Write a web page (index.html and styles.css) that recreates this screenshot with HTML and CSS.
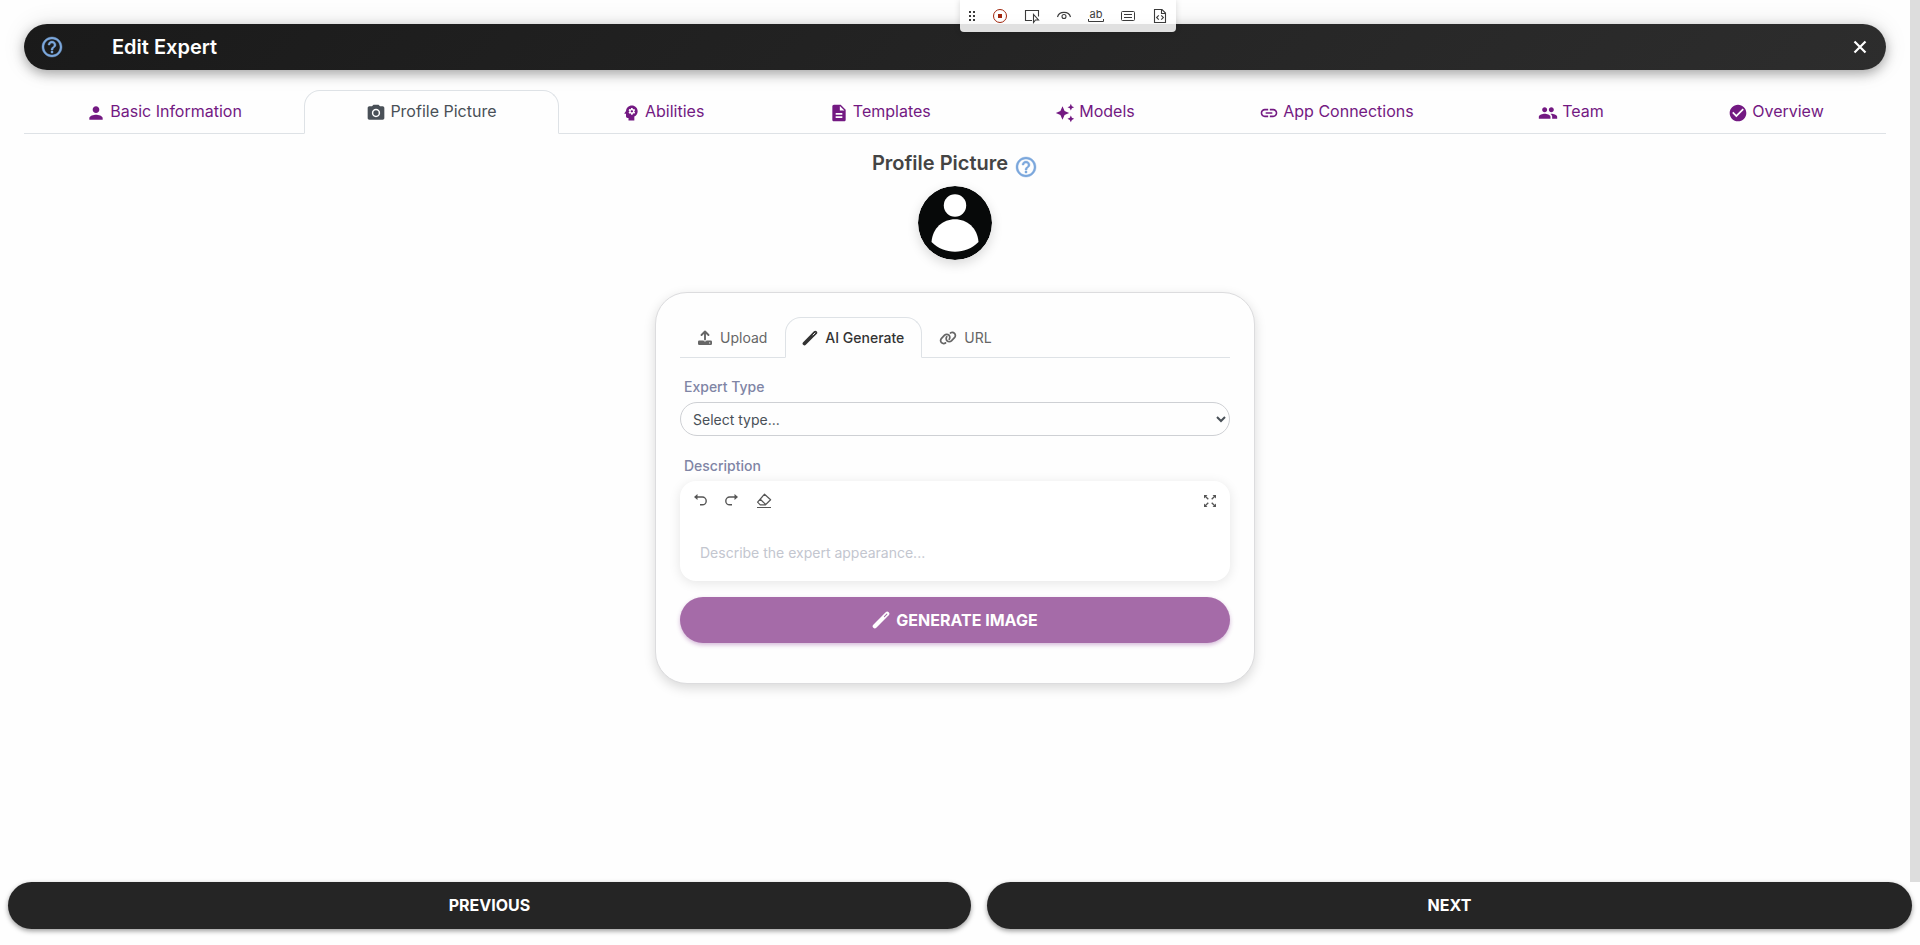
FILE: index.html
```html
<!DOCTYPE html>
<html lang="en">
<head>
    <meta charset="UTF-8" />
    <meta name="viewport" content="width=device-width, initial-scale=1.0"/>
    <title>Edit Expert</title>
    <link rel="stylesheet" href="styles.css">
</head>
<body>
<div class="page">
    <main class="content">
        <header class="title-bar">
            <button type="button" class="icon-button help" aria-label="Help">
                <svg class="icon-lg" viewBox="0 0 24 24"><path d="M11 18h2v-2h-2zm1-16C6.48 2 2 6.48 2 12s4.48 10 10 10 10-4.48 10-10S17.52 2 12 2m0 18c-4.41 0-8-3.59-8-8s3.59-8 8-8 8 3.59 8 8-3.59 8-8 8m0-14c-2.21 0-4 1.79-4 4h2c0-1.1.9-2 2-2s2 .9 2 2c0 2-3 1.75-3 5h2c0-2.25 3-2.5 3-5 0-2.21-1.79-4-4-4"/></svg>
            </button>
            <h1>Edit Expert</h1>
            <button type="button" class="icon-button close" aria-label="Close">
                <svg class="icon-close" viewBox="0 0 14 14"><path d="M1.500 1.500l11 11M12.500 1.500l-11 11" fill="none" stroke="currentColor" stroke-width="2.200"/></svg>
            </button>
        </header>

        <nav class="tabs">
            <a href="#basic" class="tab">
                <svg class="icon" viewBox="0 0 24 24"><path d="M12 12c2.21 0 4-1.79 4-4s-1.79-4-4-4-4 1.79-4 4 1.79 4 4 4m0 2c-2.67 0-8 1.34-8 4v2h16v-2c0-2.66-5.33-4-8-4"/></svg>
                <span>Basic Information</span>
            </a>
            <a href="#picture" class="tab active">
                <svg class="icon" viewBox="0 0 24 24"><circle cx="12" cy="12" r="3.2"/><path d="M9 2 7.17 4H4c-1.1 0-2 .9-2 2v12c0 1.1.9 2 2 2h16c1.1 0 2-.9 2-2V6c0-1.1-.9-2-2-2h-3.17L15 2zm3 15c-2.76 0-5-2.24-5-5s2.24-5 5-5 5 2.24 5 5-2.24 5-5 5"/></svg>
                <span>Profile Picture</span>
            </a>
            <a href="#abilities" class="tab">
                <svg class="icon" viewBox="0 0 24 24"><path d="M13 8.57c-.79 0-1.43.64-1.43 1.43s.64 1.43 1.43 1.43 1.43-.64 1.43-1.43-.64-1.43-1.43-1.43"/><path d="M13 3C9.25 3 6.2 5.94 6.02 9.64L4.1 12.2c-.25.33-.01.8.4.8H6v3c0 1.1.9 2 2 2h1v3h7v-4.68c2.36-1.12 4-3.53 4-6.32 0-3.87-3.13-7-7-7m3 7c0 .13-.01.26-.02.39l.83.66c.08.06.1.16.05.25l-.8 1.39c-.05.09-.16.12-.24.09l-.99-.4c-.21.16-.43.29-.67.39L14 13.83c-.01.1-.1.17-.2.17h-1.6c-.1 0-.18-.07-.2-.17l-.15-1.06c-.25-.1-.47-.23-.68-.39l-.99.4c-.09.03-.2 0-.25-.09l-.8-1.39c-.05-.08-.03-.19.05-.25l.84-.66c-.01-.13-.02-.26-.02-.39s.02-.27.04-.39l-.85-.66c-.08-.06-.1-.16-.05-.26l.8-1.38c.05-.09.15-.12.24-.09l1 .4c.2-.15.43-.29.67-.39L12 6.17c.02-.1.1-.17.2-.17h1.6c.1 0 .18.07.2.17l.15 1.06c.24.1.46.23.67.39l1-.4c.09-.03.2 0 .24.09l.8 1.38c.05.09.03.2-.05.26l-.85.66c.03.12.04.25.04.39"/></svg>
                <span>Abilities</span>
            </a>
            <a href="#templates" class="tab">
                <svg class="icon" viewBox="0 0 24 24"><path d="M14 2H6c-1.1 0-1.99.9-1.99 2L4 20c0 1.1.89 2 1.99 2H18c1.1 0 2-.9 2-2V8zm2 16H8v-2h8zm0-4H8v-2h8zm-3-5V3.5L18.5 9z"/></svg>
                <span>Templates</span>
            </a>
            <a href="#models" class="tab">
                <svg class="icon" viewBox="0 0 24 24"><path d="m19 9 1.25-2.75L23 5l-2.75-1.25L19 1l-1.25 2.75L15 5l2.75 1.25zM19 15l-1.25 2.75L15 19l2.75 1.25L19 23l1.25-2.75L23 19l-2.75-1.25zM11.5 9.5 9 4 6.5 9.5 1 12l5.5 2.5L9 20l2.5-5.5L17 12z"/></svg>
                <span>Models</span>
            </a>
            <a href="#connections" class="tab">
                <svg class="icon" viewBox="0 0 24 24"><path d="M3.9 12c0-1.71 1.39-3.1 3.1-3.1h4V7H7c-2.76 0-5 2.24-5 5s2.24 5 5 5h4v-1.9H7c-1.71 0-3.1-1.39-3.1-3.1M8 13h8v-2H8zm9-6h-4v1.9h4c1.71 0 3.1 1.39 3.1 3.1s-1.39 3.1-3.1 3.1h-4V17h4c2.76 0 5-2.24 5-5s-2.24-5-5-5"/></svg>
                <span>App Connections</span>
            </a>
            <a href="#team" class="tab">
                <svg class="icon" viewBox="0 0 24 24"><path d="M16 11c1.66 0 2.99-1.34 2.99-3S17.66 5 16 5s-3 1.34-3 3 1.34 3 3 3m-8 0c1.66 0 2.99-1.34 2.99-3S9.66 5 8 5 5 6.34 5 8s1.34 3 3 3m0 2c-2.33 0-7 1.17-7 3.5V19h14v-2.5c0-2.33-4.67-3.5-7-3.5m8 0c-.29 0-.62.02-.97.05 1.16.84 1.97 1.97 1.97 3.45V19h6v-2.5c0-2.33-4.67-3.5-7-3.5"/></svg>
                <span>Team</span>
            </a>
            <a href="#overview" class="tab">
                <svg class="icon" viewBox="0 0 24 24"><path d="M12 2C6.48 2 2 6.48 2 12s4.48 10 10 10 10-4.48 10-10S17.52 2 12 2m-2 15-5-5 1.41-1.41L10 14.17l7.59-7.59L19 8z"/></svg>
                <span>Overview</span>
            </a>
        </nav>

        <section class="profile">
            <div class="profile-title">
                <h2>Profile Picture</h2>
                <button type="button" class="icon-button help" aria-label="Profile picture help">
                    <svg class="icon-lg" viewBox="0 0 24 24"><path d="M11 18h2v-2h-2zm1-16C6.48 2 2 6.48 2 12s4.48 10 10 10 10-4.48 10-10S17.52 2 12 2m0 18c-4.41 0-8-3.59-8-8s3.59-8 8-8 8 3.59 8 8-3.59 8-8 8m0-14c-2.21 0-4 1.79-4 4h2c0-1.1.9-2 2-2s2 .9 2 2c0 2-3 1.75-3 5h2c0-2.25 3-2.5 3-5 0-2.21-1.79-4-4-4"/></svg>
                </button>
            </div>
            <svg class="avatar" viewBox="0 0 74 74" role="img" aria-label="Profile picture">
                <circle cx="37" cy="37" r="37" fill="#070909"/>
                <circle cx="37" cy="19.5" r="11.2" fill="#fff"/>
                <path d="M13.5 56C14.5 42 25 33.3 37 33.3S59.500 42 60.500 56C54 62.500 46 65.700 37 65.700S20 62.500 13.500 56z" fill="#fff"/>
            </svg>
        </section>

        <section class="card">
            <div class="card-tabs">
                <button type="button" class="card-tab">
                    <svg class="icon-sm" viewBox="0 0 16 16"><path d="M8 9.500V2M4.500 5 8 1.500 11.500 5" fill="none" stroke="currentColor" stroke-width="1.900" stroke-linecap="round" stroke-linejoin="round"/><path d="M2.300 10.500H6.500a1.700 1.700 0 0 0 3 0h4.200A1.300 1.300 0 0 1 15 11.800v1.900a1.300 1.300 0 0 1-1.300 1.300H2.300A1.300 1.300 0 0 1 1 13.700v-1.900a1.300 1.300 0 0 1 1.300-1.300z"/><circle cx="12.700" cy="12.900" r=".6" fill="#fff"/></svg>
                    <span>Upload</span>
                </button>
                <button type="button" class="card-tab active">
                    <svg class="icon-sm" viewBox="0 0 16 16"><path d="M2.500 13.500 13.300 2.700" fill="none" stroke="currentColor" stroke-width="3.800" stroke-linecap="round"/><path d="M11 5 13 3" fill="none" stroke="#fff" stroke-width=".9" stroke-linecap="round"/></svg>
                    <span>AI Generate</span>
                </button>
                <button type="button" class="card-tab">
                    <svg class="icon-link" viewBox="0 0 640 512"><path d="M579.8 267.7c56.500-56.500 56.500-148 0-204.500c-50-50-128.800-56.500-186.300-15.400l-1.600 1.100c-14.400 10.300-17.700 30.300-7.400 44.600s30.300 17.700 44.600 7.400l1.600-1.100c32.100-22.900 76-19.300 103.800 8.600c31.500 31.500 31.500 82.500 0 114L422.300 334.800c-31.500 31.500-82.500 31.500-114 0c-27.900-27.900-31.500-71.800-8.600-103.800l1.100-1.600c10.300-14.400 6.900-34.400-7.400-44.600s-34.400-6.900-44.600 7.400l-1.100 1.600C206.500 251.200 213 330 263 380c56.500 56.500 148 56.500 204.500 0L579.800 267.700zM60.200 244.300c-56.500 56.500-56.500 148 0 204.500c50 50 128.800 56.500 186.300 15.400l1.600-1.100c14.400-10.300 17.700-30.300 7.400-44.600s-30.300-17.700-44.600-7.400l-1.600 1.100c-32.100 22.900-76 19.300-103.800-8.600C74 372 74 321 105.500 289.500L217.700 177.200c31.500-31.500 82.500-31.500 114 0c27.900 27.900 31.500 71.800 8.600 103.900l-1.100 1.600c-10.300 14.400-6.900 34.400 7.400 44.600s34.400 6.900 44.600-7.400l1.100-1.600C433.500 260.800 427 182 377 132c-56.500-56.500-148-56.500-204.500 0L60.200 244.300z"/></svg>
                    <span>URL</span>
                </button>
            </div>

            <div class="form-group">
                <label for="expertType">Expert Type</label>
                <select id="expertType">
                    <option value="">Select type...</option>
                </select>
            </div>

            <div class="form-group">
                <label for="description">Description</label>
                <div class="editor">
                    <div class="editor-tools">
                        <button type="button" class="icon-button" aria-label="Undo">
                            <svg class="icon-sm" viewBox="0 0 16 16"><path d="M5.500 1v6L2 4z"/><path d="M4.500 4h5.800a3.800 3.800 0 0 1 0 7.800H8" fill="none" stroke="currentColor" stroke-width="1.400"/></svg>
                        </button>
                        <button type="button" class="icon-button" aria-label="Redo">
                            <svg class="icon-sm" viewBox="0 0 16 16"><path d="M10.500 1v6L14 4z"/><path d="M11.500 4H5.700a3.800 3.800 0 0 0 0 7.800H8" fill="none" stroke="currentColor" stroke-width="1.400"/></svg>
                        </button>
                        <button type="button" class="icon-button" aria-label="Clear formatting">
                            <svg class="icon-sm" viewBox="0 0 16 16"><path d="M8.500 1.200 14.600 6.800 9.500 11.800H4.200L1.600 9.200zM4.300 6.200l5.500 5.400M1 14.500h14" fill="none" stroke="currentColor" stroke-width="1.200" stroke-linejoin="round"/></svg>
                        </button>
                        <button type="button" class="icon-button expand" aria-label="Full screen">
                            <svg class="icon-sm" viewBox="0 0 16 16"><path d="M2 2h3.500L2 5.500zM14 2v3.500L10.500 2zM2 14v-3.500L5.500 14zM14 14h-3.500l3.500-3.500z"/><path d="M3 3l3.300 3.300M13 3 9.700 6.300M3 13l3.300-3.300M13 13 9.700 9.700" fill="none" stroke="currentColor" stroke-width="1.300"/></svg>
                        </button>
                    </div>
                    <textarea id="description" rows="1" placeholder="Describe the expert appearance..."></textarea>
                </div>
            </div>

            <button type="button" class="generate">
                <svg class="icon-wand" viewBox="0 0 16 16"><path d="M2.500 13.500 13.500 2.500" fill="none" stroke="currentColor" stroke-width="3.800" stroke-linecap="round"/><path d="M11 5 13.200 2.800" fill="none" stroke="#a56ba8" stroke-width=".9" stroke-linecap="round"/></svg>
                <span>GENERATE IMAGE</span>
            </button>
        </section>
    </main>
    <div class="scroll-track"></div>
</div>

<footer class="actions">
    <button type="button">PREVIOUS</button>
    <button type="button">NEXT</button>
</footer>

<div class="recorder">
    <svg class="grip" viewBox="0 0 24 32"><path d="M9 11h2v2H9zM13 11h2v2h-2zM9 15h2v2H9zM13 15h2v2h-2zM9 19h2v2H9zM13 19h2v2h-2z"/></svg>
    <button type="button" class="record" aria-label="Record">
        <svg viewBox="0 0 16 16"><circle cx="8" cy="8" r="6.500" fill="none" stroke="currentColor"/><path d="M6 6h4v4H6z"/></svg>
    </button>
    <button type="button" aria-label="Pick locator">
        <svg viewBox="0 0 16 16"><path d="M8 12.500H1.500v-10h13v6M9.500 6.500v8l2-2.500h3z" fill="none" stroke="currentColor" stroke-width="1.100"/></svg>
    </button>
    <button type="button" aria-label="Assert visibility">
        <svg viewBox="0 0 16 16"><path d="M1.500 9C3 2.800 13 2.800 14.500 9" fill="none" stroke="currentColor" stroke-width="1.100"/><circle cx="8" cy="8.500" r="2" fill="none" stroke="currentColor" stroke-width="1.100"/></svg>
    </button>
    <button type="button" class="assert-text" aria-label="Assert text">
        <span>ab</span>
        <svg viewBox="0 0 16 3"><path d="M.5 0v2.500h15V0" fill="none" stroke="currentColor"/></svg>
    </button>
    <button type="button" aria-label="Assert value">
        <svg viewBox="0 0 16 16"><rect x="1.500" y="3.500" width="13" height="9" rx="1" fill="none" stroke="currentColor"/><path d="M4 6.500h8M4 9.500h8" stroke="currentColor"/></svg>
    </button>
    <button type="button" aria-label="Assert snapshot">
        <svg viewBox="0 0 16 16"><path d="M2.500 1.500h7.500l3.500 3.500v9.500h-11zM9.500 1.500v4h4M6.800 7.300 4.600 9.500l2.200 2.200M9.200 7.300l2.200 2.200-2.200 2.200" fill="none" stroke="currentColor" stroke-width="1.100"/></svg>
    </button>
</div>
</body>
</html>
```
FILE: styles.css
```css
* {
    box-sizing: border-box;
}

body {
    margin: 0;
    min-height: 100vh;
    display: flex;
    flex-direction: column;
    font-family: Inter, sans-serif;
    font-size: 16px;
    line-height: 24px;
    color: #444;
    background-color: #fefefe;
}

h1, h2 {
    margin: 0;
    font-size: 20px;
    font-weight: 600;
    line-height: 24px;
}

button, select, textarea {
    font-family: inherit;
}

button {
    cursor: pointer;
}

svg {
    display: block;
    flex-shrink: 0;
    fill: currentColor;
}

.page {
    flex: 1;
    display: flex;
}

.content {
    flex: 1;
    padding: 24px;
}

.scroll-track {
    width: 10px;
    background-color: #ddd;
}

.icon-button {
    padding: 0;
    border: none;
    background: none;
    color: #555;
}

.help {
    color: #7ba7dc;
}

.help svg {
    stroke: currentColor;
    stroke-width: 0.4;
}

.icon {
    width: 20px;
    height: 20px;
}

.icon-lg {
    width: 24px;
    height: 24px;
}

.icon-sm {
    width: 16px;
    height: 16px;
}

.icon-link {
    width: 18px;
    height: 14px;
}

.icon-wand {
    width: 18px;
    height: 18px;
}

.icon-close {
    width: 14px;
    height: 14px;
}

/* title bar */
.title-bar {
    display: flex;
    align-items: center;
    height: 46px;
    padding: 0 19px 0 16px;
    border-radius: 23px;
    background: linear-gradient(135deg, #1a1a1a, #2d2d2d);
    box-shadow: 0 4px 12px rgba(0, 0, 0, 0.3), 0 0 24px rgba(0, 0, 0, 0.1);
}

.title-bar h1 {
    flex: 1;
    margin-left: 48px;
    color: white;
}

.close {
    color: white;
}

/* main tabs */
.tabs {
    display: flex;
    margin-top: 20px;
    border-bottom: 1px solid #dee2e6;
}

.tab {
    flex: 1 1 auto;
    display: flex;
    justify-content: center;
    gap: 4px;
    height: 44px;
    margin-bottom: -1px;
    padding: 8px 16px;
    border: 1px solid transparent;
    border-radius: 16px 16px 0 0;
    color: #731982;
    text-decoration: none;
}

.tab .icon {
    margin-top: 4px;
}

.tab.active {
    color: #495057;
    background-color: #fefefe;
    border-color: #dee2e6 #dee2e6 #fefefe;
}

/* profile picture */
.profile {
    display: flex;
    flex-direction: column;
    align-items: center;
    padding-top: 16px;
}

.profile-title {
    display: flex;
    gap: 6px;
}

.profile-title h2 {
    line-height: 26px;
}

.profile-title .help {
    margin-top: 5px;
}

.avatar {
    width: 74px;
    height: 74px;
    margin-top: 7px;
    border-radius: 50%;
    box-shadow: 0 4px 12px rgba(0, 0, 0, 0.15);
}

/* card */
.card {
    max-width: 600px;
    margin: 32px auto 0;
    padding: 24px 24px 40px;
    border: 1px solid #dcdcde;
    border-radius: 32px;
    background-color: #fefefe;
    box-shadow: 0 4px 12px rgba(0, 0, 0, 0.15);
}

.card-tabs {
    display: flex;
    margin-bottom: 18px;
    border-bottom: 1px solid #dee2e6;
}

.card-tab {
    display: flex;
    align-items: center;
    gap: 7px;
    height: 41px;
    margin-bottom: -1px;
    padding: 0 17px 0 16px;
    border: 1px solid transparent;
    border-radius: 16px 16px 0 0;
    background: none;
    font-size: 14px;
    color: #666;
}

.card-tab.active {
    color: #333;
    font-weight: 500;
    background-color: #fefefe;
    border-color: #dee2e6 #dee2e6 #fefefe;
}

.form-group {
    margin-bottom: 16px;
}

.form-group label {
    display: block;
    margin: 0 4px 4px;
    font-size: 14px;
    font-weight: 500;
    line-height: 22px;
    color: #8085a5;
}

select {
    display: block;
    width: 100%;
    height: 34px;
    margin-bottom: 19px;
    padding: 0 0 0 8px;
    border: 1px solid #ced0d4;
    border-radius: 17px;
    background-color: #fefefe;
    font-size: 14px;
    color: #495057;
}

.editor {
    border-radius: 16px;
    background-color: white;
    box-shadow: 0 2px 12px rgba(0, 0, 0, 0.1);
}

.editor-tools {
    display: flex;
    gap: 16px;
    padding: 12px 12px 0;
}

.expand {
    margin-left: auto;
}

textarea {
    display: block;
    width: 100%;
    height: 72px;
    padding: 32px 20px 16px;
    border: none;
    background: none;
    resize: none;
    font-size: 14px;
    line-height: 24px;
}

textarea::placeholder {
    color: #c3c6cf;
}

.generate {
    display: flex;
    align-items: center;
    justify-content: center;
    gap: 6px;
    width: 100%;
    height: 46px;
    border: none;
    border-radius: 23px;
    background-color: #a56ba8;
    box-shadow: 0 2px 4px rgba(115, 25, 130, 0.3);
    font-size: 16px;
    font-weight: 700;
    color: white;
}

/* footer */
.actions {
    display: flex;
    gap: 16px;
    padding: 0 8px 16px;
}

.actions button {
    flex: 1 1 auto;
    height: 47px;
    padding: 0 6px 2px;
    border: none;
    border-radius: 24px;
    background-color: #252525;
    box-shadow: 0 2px 5px rgba(0, 0, 0, 0.4);
    font-size: 16px;
    font-weight: 700;
    color: white;
}

/* recorder toolbar, floats over the page */
.recorder {
    position: absolute;
    top: 0;
    left: 50%;
    display: flex;
    height: 32px;
    border-radius: 0 0 4px 4px;
    background-color: rgba(255, 255, 255, 0.86);
    box-shadow: 0 0 6px rgba(0, 0, 0, 0.15);
    color: #3b3b3b;
}

.recorder button {
    display: flex;
    align-items: center;
    justify-content: center;
    width: 32px;
    padding: 0;
    border: none;
    background: none;
    color: inherit;
}

.recorder button svg {
    width: 16px;
    height: 16px;
}

.recorder .record {
    color: #a1260d;
}

.grip {
    width: 24px;
    height: 32px;
}

.recorder .assert-text {
    flex-direction: column;
    font-size: 11px;
    line-height: 9px;
}

.recorder .assert-text svg {
    height: 3px;
}
```
